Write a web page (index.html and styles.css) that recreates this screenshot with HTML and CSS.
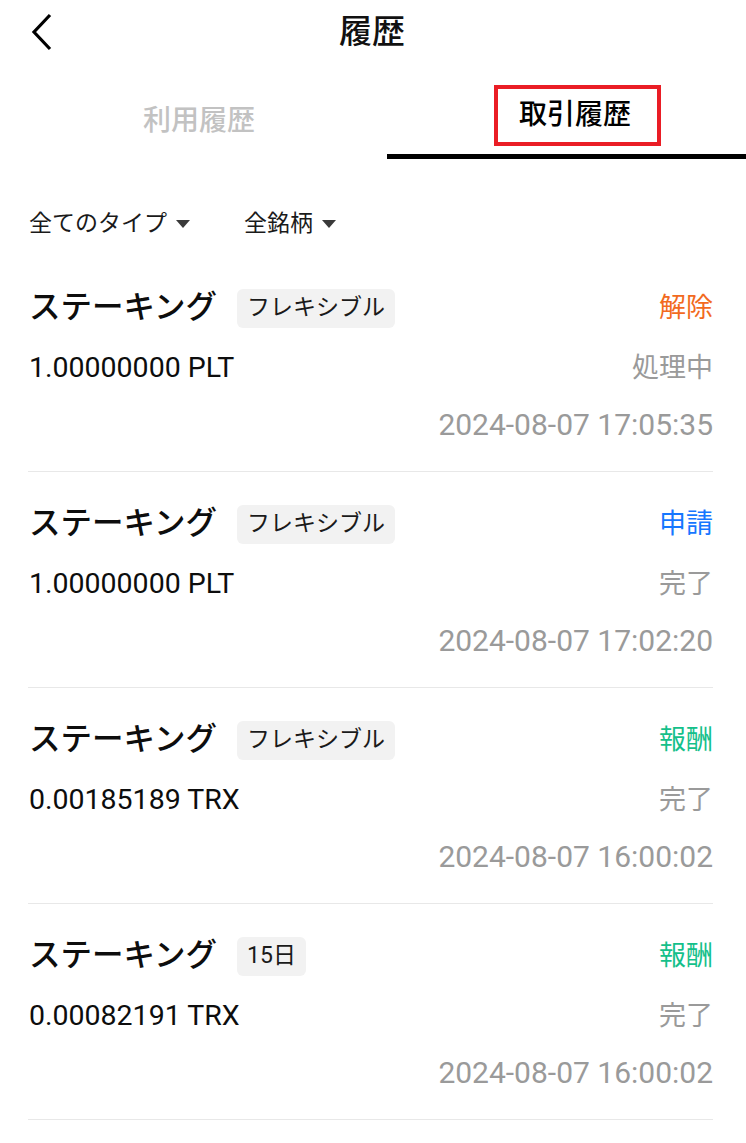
FILE: index.html
```html
<!DOCTYPE html>
<html lang="ja">
<head>
<meta charset="utf-8">
<title>履歴</title>
<link rel="stylesheet" href="styles.css">
</head>
<body>
<div class="page">
  <header class="header">
    <div class="back">
      <svg width="22" height="38" viewBox="0 0 22 38"><polyline points="19,2 3,19 19,36" fill="none" stroke="#000" stroke-width="3.2"/></svg>
    </div>
    <h1 class="title">履歴</h1>
    <div></div>
  </header>

  <nav class="tabs">
    <div class="tab tab-inactive">利用履歴</div>
    <div class="tab tab-active"><span class="highlight">取引履歴</span></div>
  </nav>

  <div class="filters">
    <div class="filter">全てのタイプ<span class="caret"></span></div>
    <div class="filter">全銘柄<span class="caret"></span></div>
  </div>

  <div class="list">
    <div class="item">
      <div class="row">
        <div class="name">ステーキング<span class="tag">フレキシブル</span></div>
        <div class="type orange">解除</div>
      </div>
      <div class="row mid">
        <div class="amount">1.00000000 PLT</div>
        <div class="status">処理中</div>
      </div>
      <div class="row end">
        <div class="date">2024-08-07 17:05:35</div>
      </div>
    </div>

    <div class="item">
      <div class="row">
        <div class="name">ステーキング<span class="tag">フレキシブル</span></div>
        <div class="type blue">申請</div>
      </div>
      <div class="row mid">
        <div class="amount">1.00000000 PLT</div>
        <div class="status">完了</div>
      </div>
      <div class="row end">
        <div class="date">2024-08-07 17:02:20</div>
      </div>
    </div>

    <div class="item">
      <div class="row">
        <div class="name">ステーキング<span class="tag">フレキシブル</span></div>
        <div class="type green">報酬</div>
      </div>
      <div class="row mid">
        <div class="amount">0.00185189 TRX</div>
        <div class="status">完了</div>
      </div>
      <div class="row end">
        <div class="date">2024-08-07 16:00:02</div>
      </div>
    </div>

    <div class="item">
      <div class="row">
        <div class="name">ステーキング<span class="tag">15日</span></div>
        <div class="type green">報酬</div>
      </div>
      <div class="row mid">
        <div class="amount">0.00082191 TRX</div>
        <div class="status">完了</div>
      </div>
      <div class="row end">
        <div class="date">2024-08-07 16:00:02</div>
      </div>
    </div>
  </div>
</div>
</body>
</html>
```

FILE: styles.css
```css
* { box-sizing: border-box; }
html, body { margin: 0; padding: 0; background: #fff; }
body {
  font-family: Roboto, "Noto Sans CJK JP", sans-serif;
  color: #111;
}
.page { width: 746px; }

.header {
  height: 64px;
  display: grid;
  grid-template-columns: 80px 1fr 80px;
  align-items: center;
}
.back { padding-left: 31px; display: flex; align-items: center; height: 38px; }
.title {
  margin: 0;
  text-align: center;
  font-size: 33px;
  font-weight: 500;
  line-height: 40px;
  padding-right: 2px;
}

.tabs {
  display: grid;
  grid-template-columns: 387px 1fr;
  height: 95px;
}
.tab {
  display: flex;
  justify-content: center;
  align-items: center;
  padding-top: 18px;
  font-size: 28px;
  font-weight: 500;
  line-height: 28px;
}
.tab-inactive { color: #c2c2c2; padding-left: 11px; }
.tab-active {
  color: #000;
  padding-left: 22px;
  border-bottom: 5px solid #000;
}
.highlight {
  display: inline-block;
  border: 4px solid #ea1d25;
  padding: 12px 26px 13px 21px;
  margin-top: -6px;
}

.filters {
  display: flex;
  gap: 54px;
  padding: 52px 0 19px 29px;
}
.filter {
  display: flex;
  align-items: center;
  font-size: 23px;
  line-height: 26px;
  color: #1a1a1a;
}
.caret {
  display: inline-block;
  width: 0; height: 0;
  margin-left: 9px;
  border-left: 7px solid transparent;
  border-right: 7px solid transparent;
  border-top: 8px solid #3a3a3a;
}

.list { padding: 0 33px 0 28px; }
.item {
  padding: 32px 0 29px 1px;
  border-bottom: 1px solid #e8e8e8;
  display: flex;
  flex-direction: column;
  gap: 23px;
}
.row {
  display: flex;
  justify-content: space-between;
  align-items: center;
  height: 34px;
}
.row:first-child { height: 40px; }
.row.end { justify-content: flex-end; }
.name {
  display: flex;
  align-items: center;
  font-size: 31.5px;
  font-weight: 500;
  line-height: 40px;
  color: #0d0d0d;
}
.tag {
  display: inline-flex;
  align-items: center;
  height: 39px;
  margin-left: 20px;
  padding: 0 10px;
  background: #f2f2f2;
  border-radius: 6px;
  font-size: 23px;
  font-weight: 400;
  color: #1a1a1a;
}
.type { font-size: 27px; line-height: 34px; }
.orange { color: #f26a1e; }
.blue { color: #1677ff; }
.green { color: #14c08a; }
.amount { font-size: 28.5px; line-height: 34px; color: #0d0d0d; }
.status { font-size: 27px; line-height: 34px; color: #9a9a9a; }
.date { font-size: 30px; line-height: 34px; color: #9a9a9a; }
```
